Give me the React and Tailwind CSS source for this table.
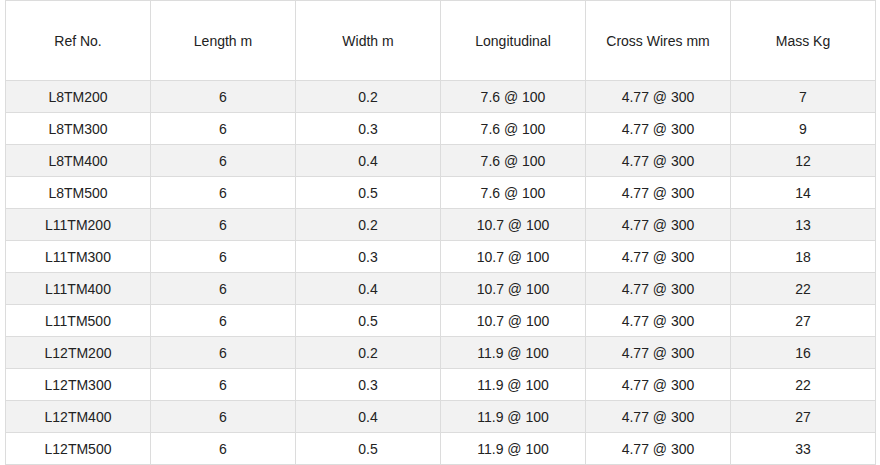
const rows = [
  ["L8TM200", "6", "0.2", "7.6 @ 100", "4.77 @ 300", "7"],
  ["L8TM300", "6", "0.3", "7.6 @ 100", "4.77 @ 300", "9"],
  ["L8TM400", "6", "0.4", "7.6 @ 100", "4.77 @ 300", "12"],
  ["L8TM500", "6", "0.5", "7.6 @ 100", "4.77 @ 300", "14"],
  ["L11TM200", "6", "0.2", "10.7 @ 100", "4.77 @ 300", "13"],
  ["L11TM300", "6", "0.3", "10.7 @ 100", "4.77 @ 300", "18"],
  ["L11TM400", "6", "0.4", "10.7 @ 100", "4.77 @ 300", "22"],
  ["L11TM500", "6", "0.5", "10.7 @ 100", "4.77 @ 300", "27"],
  ["L12TM200", "6", "0.2", "11.9 @ 100", "4.77 @ 300", "16"],
  ["L12TM300", "6", "0.3", "11.9 @ 100", "4.77 @ 300", "22"],
  ["L12TM400", "6", "0.4", "11.9 @ 100", "4.77 @ 300", "27"],
  ["L12TM500", "6", "0.5", "11.9 @ 100", "4.77 @ 300", "33"],
];

const headers = ["Ref No.", "Length m", "Width m", "Longitudinal", "Cross Wires mm", "Mass Kg"];

export default function App() {
  return (
    <div className="bg-white w-[880px] h-[465px] pl-[5px] font-['Liberation_Sans',Arial,sans-serif] text-[14px] text-[#222]">
      <table className="table-fixed border-collapse w-[871px]">
        <thead>
          <tr className="h-[80px]">
            {headers.map((h) => (
              <th key={h} className="border border-[#dcdcdc] font-normal text-center w-[145px] pt-[2px]">
                {h}
              </th>
            ))}
          </tr>
        </thead>
        <tbody>
          {rows.map((r, i) => (
            <tr key={r[0]} className={i % 2 === 0 ? "h-[32px] bg-[#f2f2f2]" : "h-[32px] bg-white"}>
              {r.map((c, j) => (
                <td key={j} className="border border-[#dcdcdc] text-center p-0 pt-[1px]">
                  {c}
                </td>
              ))}
            </tr>
          ))}
        </tbody>
      </table>
    </div>
  );
}
